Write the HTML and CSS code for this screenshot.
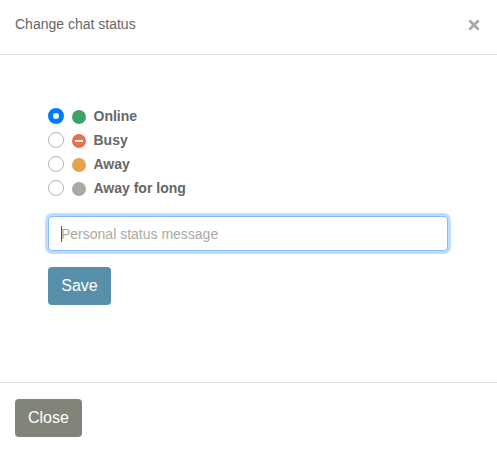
FILE: index.html
```
<!DOCTYPE html>
<html lang="en">
<head>
    <meta charset="UTF-8">
    <meta name="viewport" content="width=device-width, initial-scale=1.0">
    <title>Change chat status</title>
    <link rel="stylesheet" href="styles.css">
</head>
<body>
    <div class="modal">
        <div class="modal-header">
            <h5 class="modal-title">Change chat status</h5>
            <button type="button" class="close" aria-label="Close">
                <svg width="12" height="12" viewBox="0 0 12 12">
                    <path d="M2.2 2.2L9.8 9.8M9.8 2.2L2.2 9.8"/>
                </svg>
            </button>
        </div>

        <form class="modal-body">
            <div class="status-list">
                <label class="status-option">
                    <input type="radio" name="status" checked>
                    <span class="dot online"></span>
                    <span class="status-name">Online</span>
                </label>
                <label class="status-option">
                    <input type="radio" name="status">
                    <span class="dot busy"></span>
                    <span class="status-name">Busy</span>
                </label>
                <label class="status-option">
                    <input type="radio" name="status">
                    <span class="dot away"></span>
                    <span class="status-name">Away</span>
                </label>
                <label class="status-option">
                    <input type="radio" name="status">
                    <span class="dot long-away"></span>
                    <span class="status-name">Away for long</span>
                </label>
            </div>

            <div class="message-field">
                <span class="caret"></span>
                <input type="text" class="message-input" placeholder="Personal status message">
            </div>

            <button type="button" class="btn save-btn">Save</button>
        </form>

        <div class="modal-footer">
            <button type="button" class="btn close-btn">Close</button>
        </div>
    </div>
</body>
</html>
```
FILE: styles.css
```
* {
    margin: 0;
    padding: 0;
    box-sizing: border-box;
}

body {
    font-family: "Liberation Sans", Arial, sans-serif;
    font-size: 14px;
    line-height: 1.5;
    background: #fff;
    color: #666;
}

.modal {
    display: flex;
    flex-direction: column;
    height: 450px;
}

.modal-header {
    display: flex;
    justify-content: space-between;
    align-items: flex-start;
    height: 55px;
    padding: 14px 17px 0 15px;
    border-bottom: 1px solid #dee2e6;
}

.modal-title {
    font-size: 14px;
    font-weight: normal;
    line-height: 21px;
}

.close {
    width: 12px;
    height: 12px;
    margin-top: 5px;
    border: none;
    background: none;
    cursor: pointer;
}

.close svg {
    display: block;
    fill: none;
    stroke: #a8a9a2;
    stroke-width: 2.8;
    stroke-linecap: round;
}

.modal-body {
    flex: 1;
    padding: 49px 49px 0 48px;
}

.status-list {
    margin-bottom: 16px;
}

.status-option {
    display: flex;
    align-items: center;
    height: 24px;
    font-weight: bold;
}

.status-option input {
    appearance: none;
    width: 16px;
    height: 16px;
    margin-right: 8px;
    border: 1px solid #adb5bd;
    border-radius: 50%;
    background: #fff;
}

.status-option input:checked {
    border: 5px solid #007bff;
}

.dot {
    display: flex;
    align-items: center;
    justify-content: center;
    width: 14px;
    height: 14px;
    margin: 2px 7.5px 0 0;
    border-radius: 50%;
}

.online {
    background: #3ba569;
}

.busy {
    background: #e77051;
}

.busy::before {
    content: "";
    width: 8px;
    height: 2px;
    background: #fff;
}

.away {
    background: #e7a151;
}

.long-away {
    background: #a8aba1;
}

.message-field {
    position: relative;
    width: 400px;
    margin-bottom: 16px;
}

.message-input {
    display: block;
    width: 100%;
    height: 35px;
    padding: 6px 12px;
    border: 1px solid #80bdff;
    border-radius: 4px;
    box-shadow: 0 0 0 3px #bfdeff;
    font: inherit;
    outline: none;
}

.message-input::placeholder {
    color: #a8aba1;
    opacity: 1;
}

.caret {
    position: absolute;
    top: 10px;
    left: 13px;
    width: 1px;
    height: 16px;
    background: #555;
}

.btn {
    display: block;
    height: 38px;
    padding: 0 13px;
    border: none;
    border-radius: 4px;
    color: #fff;
    font-family: inherit;
    font-size: 16px;
    line-height: 38px;
    cursor: pointer;
}

.save-btn {
    min-width: 63px;
    background: #5890ab;
}

.close-btn {
    background: #818479;
}

.modal-footer {
    height: 68px;
    padding: 16px 15px;
    border-top: 1px solid #dee2e6;
}
```
